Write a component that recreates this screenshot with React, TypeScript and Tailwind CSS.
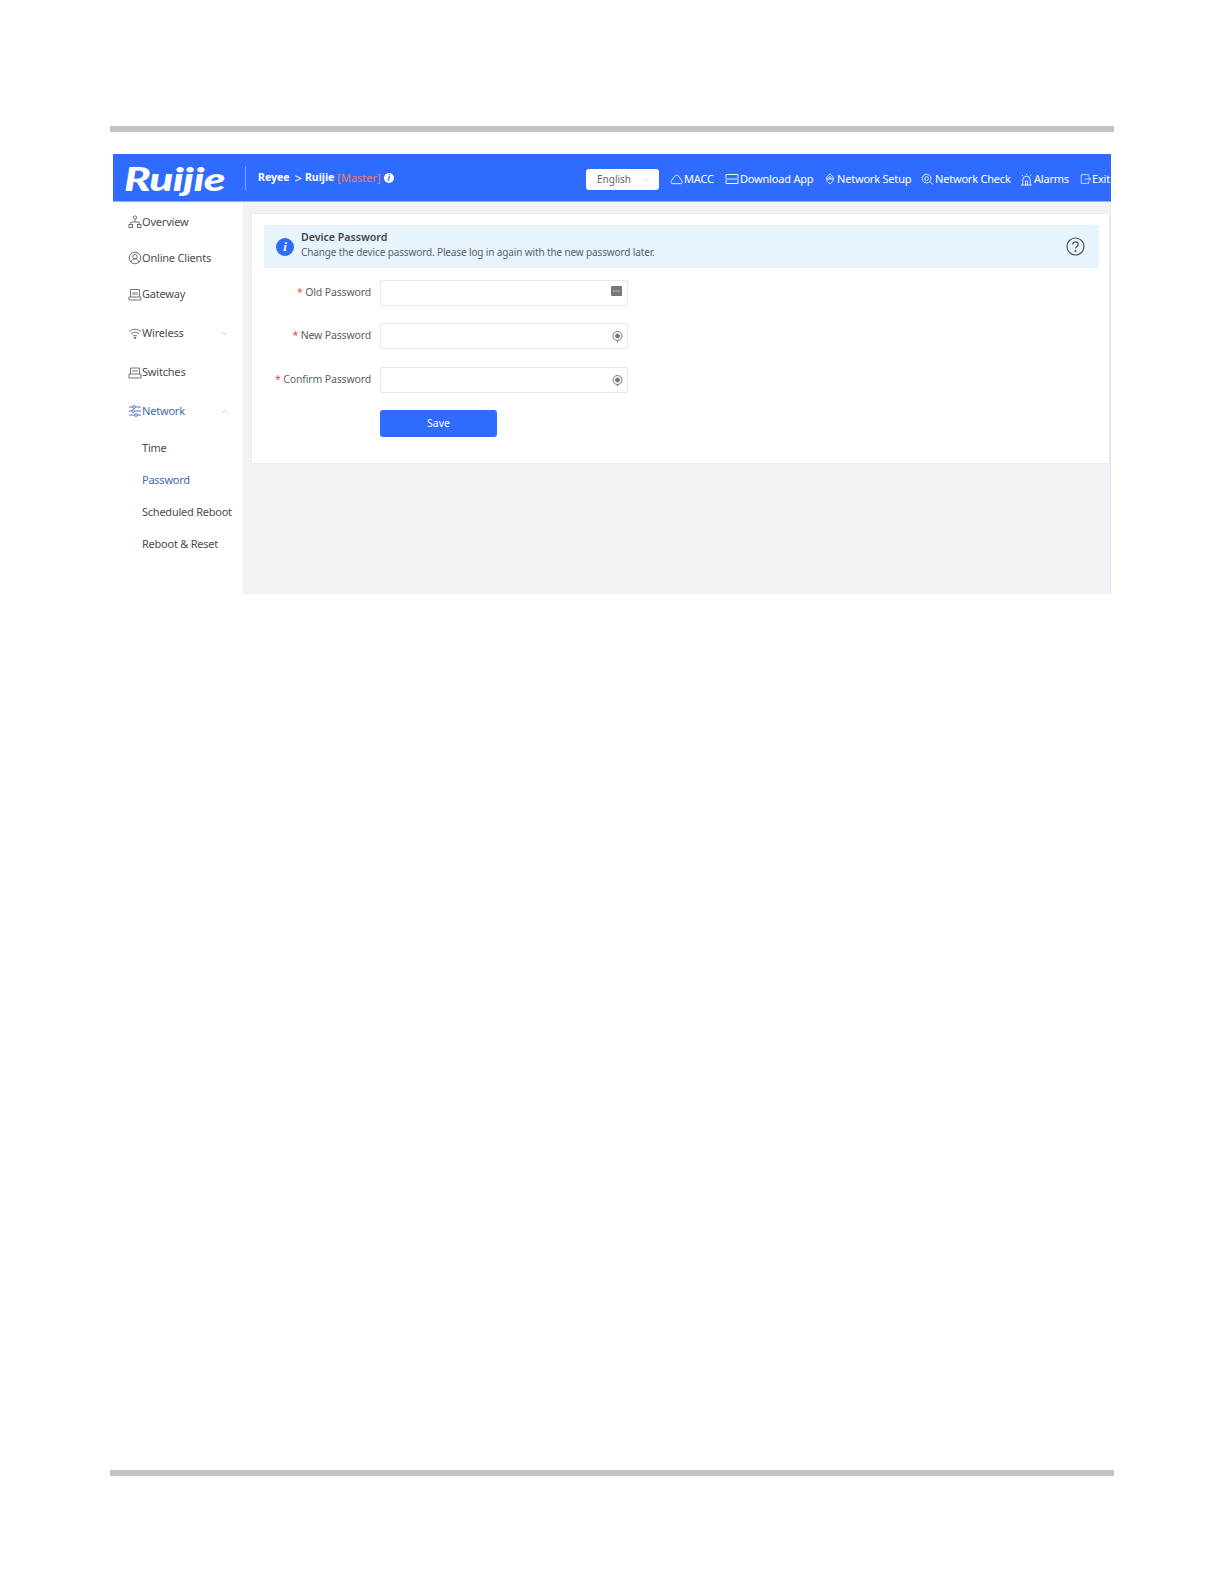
import React from 'react';
import { ChevronDown, ChevronUp } from 'lucide-react';

const font = { fontFamily: '"Noto Sans", "Open Sans", sans-serif' };

const Ico: React.FC<{ size?: number; className?: string; children: React.ReactNode }> = ({ size = 14, className, children }) => (
  <svg width={size} height={size} viewBox="0 0 14 14" fill="none" stroke="currentColor" strokeWidth="0.9" className={className}>
    {children}
  </svg>
);

const OverviewIcon = () => (
  <Ico><rect x="5.5" y="1" width="3" height="3" rx="1" /><rect x="1" y="9.5" width="3.5" height="3" /><rect x="9.5" y="9.5" width="3.5" height="3" /><path d="M7 4v3M2.8 9.5V7h8.4v2.5" /></Ico>
);
const ClientsIcon = () => (
  <Ico><circle cx="7" cy="7" r="5.8" /><circle cx="7" cy="5.6" r="2.2" /><path d="M3 11c.6-2 2-3 4-3s3.400 1 4 3" /></Ico>
);
const GatewayIcon = () => (
  <Ico><path d="M2.500 9V1.500h9V9M1 9h12v3H1zM5 4v3M7 4v3M9 4v3" /></Ico>
);
const WifiIcon = () => (
  <Ico><path d="M1 5.500c3.400-3 8.600-3 12 0M3 7.800c2.300-2 5.700-2 8 0M5 10c1.200-.9 2.800-.9 4 0" /><circle cx="7" cy="11.800" r=".8" fill="currentColor" /></Ico>
);
const SwitchIcon = () => (
  <Ico><path d="M2.500 8V2h9v6M1 8h12v4H1zM4 5h6" /></Ico>
);
const NetworkIcon = () => (
  <Ico><path d="M1 3h3.500M8 3h5M1 7h2M7 7h6M1 11h5M9.500 11H13" /><circle cx="6" cy="3" r="1.400" /><circle cx="5" cy="7" r="1.400" /><circle cx="8" cy="11" r="1.400" /></Ico>
);
const CloudIcon = () => (
  <Ico size={13}><path d="M3 11.500h8.500c2 0 2-2.300 1-3.300L9.500 3.500C8.500 2 6 2 5 3.500L1.200 8.800c-.7 1.200 0 2.700 1.800 2.700z" /></Ico>
);
const AppIcon = () => (
  <Ico size={14}><path d="M1 6V2.500h12V6M1 8v3.500h12V8M0.500 7h13" /></Ico>
);
const SetupIcon = () => (
  <Ico size={12}><path d="M7 1l3.500 3.500v5L7 13 3.500 9.500v-5zM2 7h10" /><circle cx="7" cy="5.500" r="1.300" /></Ico>
);
const CheckIcon = () => (
  <Ico size={13}><circle cx="6" cy="6" r="4.700" /><circle cx="6" cy="6" r="2" /><path d="M9.500 9.500l3.500 3" /></Ico>
);
const AlarmIcon = () => (
  <Ico size={13}><path d="M1 13h12M3 13V7.500a4 4 0 0 1 8 0V13M6 13V8.500h2V13M7 .8v1.500M2 2l1.300 1.300M12 2l-1.300 1.300" /></Ico>
);
const ExitIcon = () => (
  <Ico size={14}><path d="M11 4V1.500H1.500v11H11V10M6 7h7.500M11 4.800L13.500 7 11 9.200" /></Ico>
);
const HelpIcon = () => (
  <svg width="19" height="19" viewBox="0 0 19 19" fill="none" stroke="#4b4f55" strokeWidth="1.200">
    <circle cx="9.500" cy="9.500" r="8.500" />
    <path d="M6.800 7.500c0-3.400 5.400-3.400 5.400 0 0 2-2.700 2-2.700 4" />
    <circle cx="9.500" cy="14" r=".5" />
  </svg>
);
const EyeOffIcon = () => (
  <svg width="11" height="10" viewBox="0 0 11 10" className="mb-[4px] mr-[1px]"><rect width="11" height="10" rx="1" fill="#777" /><path d="M2 5h7" stroke="#ddd" strokeDasharray="1.500 1" /></svg>
);
const EyeIcon = () => (
  <svg width="11" height="13" viewBox="0 0 11 13" fill="none" stroke="#777" strokeWidth="1">
    <circle cx="5.500" cy="6" r="4.500" /><circle cx="5.500" cy="6" r="2" fill="#777" /><path d="M5.500 10.500v2" />
  </svg>
);

const sideMain = [
  { label: 'Overview', icon: <OverviewIcon />, h: 'h-[36px]' },
  { label: 'Online Clients', icon: <ClientsIcon />, h: 'h-[36px]' },
  { label: 'Gateway', icon: <GatewayIcon />, h: 'h-[37px]' },
  { label: 'Wireless', icon: <WifiIcon />, h: 'h-[40px]', more: 'down' },
  { label: 'Switches', icon: <SwitchIcon />, h: 'h-[39px]' },
];

const subItems = ['Time', 'Password', 'Scheduled Reboot', 'Reboot & Reset'];

const fields = [
  { label: 'Old Password', icon: <EyeOffIcon />, mb: 'mb-[17px]' },
  { label: 'New Password', icon: <EyeIcon />, mb: 'mb-[18px]' },
  { label: 'Confirm Password', icon: <EyeIcon />, mb: 'mb-[16px]' },
];

const navLinks = [
  { label: 'MACC', icon: <CloudIcon />, w: 'w-[55px]' },
  { label: 'Download App', icon: <AppIcon />, w: 'w-[99px]' },
  { label: 'Network Setup', icon: <SetupIcon />, w: 'w-[97px]' },
  { label: 'Network Check', icon: <CheckIcon />, w: 'w-[99px]' },
  { label: 'Alarms', icon: <AlarmIcon />, w: 'w-[60px]' },
  { label: 'Exit', icon: <ExitIcon />, w: 'w-[30px]' },
];

export default function App() {
  return (
    <div className="min-h-[1584px] bg-white pt-[126px] pl-[110px] w-[1224px]" style={font}>
      <div className="w-[1004px] h-[6px] bg-[#c3c3c3]" />

      <div className="ml-[3px] mt-[22px] w-[998px]">
        {/* Top bar */}
        <div className="h-[48px] bg-[#2f6bff] border-b border-[#8fb0f5] flex items-center text-white overflow-hidden">
          <div className="w-[132px] pl-[11px] shrink-0">
            <span className="block text-[32px] leading-none font-black italic tracking-[-0.5px] origin-left scale-x-[1.38] mt-[2px]" style={{ fontFamily: 'Lato, sans-serif' }}>Ruijie</span>
          </div>
          <div className="w-px h-[24px] bg-white/40 shrink-0" />
          <div className="flex items-center ml-[12px] text-[10.5px] font-bold w-[328px] shrink-0 pt-[1px]">
            <span>Reyee</span>
            <span className="ml-[5px] font-normal text-[13px] leading-none">&gt;</span>
            <span className="ml-[3px]">Ruijie</span>
            <span className="ml-[3px] font-normal text-[11px] text-[#f0805f]">[Master]</span>
            <span className="ml-[3px] w-[10px] h-[10px] rounded-full bg-white text-[#2f6bff] text-[8px] leading-[10px] text-center italic">i</span>
          </div>
          <div className="w-[73px] h-[21px] bg-white rounded-[3px] flex items-center justify-between pl-[11px] pr-[8px] text-[10px] text-[#666] shrink-0 mr-[11px] mt-[4px]">
            <span>English</span>
            <ChevronDown size={11} strokeWidth={1} className="text-[#aaa]" />
          </div>
          {navLinks.map(n => (
            <div key={n.label} className={`${n.w} shrink-0 flex items-center gap-[1px] text-[11px] tracking-[-0.2px] whitespace-nowrap pt-[3px]`}>
              {n.icon}
              <span>{n.label}</span>
            </div>
          ))}
        </div>

        <div className="flex h-[392px]">
          {/* Sidebar */}
          <div className="w-[130px] shrink-0 pt-[2px] text-[#4a4d52] text-[11px] tracking-[-0.2px]">
            {sideMain.map(s => (
              <div key={s.label} className={`${s.h} flex items-center pl-[15px]`}>
                <span className="text-[#666]">{s.icon}</span>
                <span className="flex-1">{s.label}</span>
                {s.more === 'down' && <ChevronDown size={11} strokeWidth={1} className="mr-[13px] text-[#999]" />}
              </div>
            ))}
            <div className="h-[38px] flex items-center pl-[15px] text-[#3f69b8]">
              <NetworkIcon />
              <span className="flex-1">Network</span>
              <ChevronUp size={11} strokeWidth={1} className="mr-[13px] text-[#999]" />
            </div>
            <div className="pt-[2px]">
              {subItems.map((t, i) => (
                <div key={t} className={`h-[32px] flex items-center pl-[29px] tracking-[-0.24px] whitespace-nowrap ${i === 1 ? 'text-[#3f69b8]' : ''}`}>{t}</div>
              ))}
            </div>
          </div>

          {/* Content */}
          <div className="flex-1 bg-[#f0f2f5] border-r border-[#e8e8e8] pt-[11px] pl-[8px]">
            <div className="h-[251px] bg-white border border-[#ececec] pt-[11px] pl-[12px] pr-[10px]">
              <div className="h-[43px] bg-[#e8f4fd] flex items-center pl-[12px] pr-[14px]">
                <span className="w-[18px] h-[18px] rounded-full bg-[#2f6bff] text-white text-[13px] leading-[18px] text-center font-bold italic shrink-0" style={{ fontFamily: '"Liberation Serif", serif' }}>i</span>
                <div className="ml-[7px] flex-1 pb-[3px]">
                  <div className="text-[10.6px] leading-[15px] font-semibold text-[#3f444b]">Device Password</div>
                  <div className="text-[10px] leading-[15px] tracking-[-0.13px] text-[#5a5f66]">Change the device password. Please log in again with the new password later.</div>
                </div>
                <HelpIcon />
              </div>
              <div className="mt-[12px]">
                {fields.map(f => (
                  <div key={f.label} className={`flex items-center h-[26px] ${f.mb}`}>
                    <label className="w-[107px] text-right text-[10.5px] tracking-[-0.15px] text-[#5a5f66] whitespace-nowrap pb-[1px]">
                      <span className="text-[#e2574c]">* </span>{f.label}
                    </label>
                    <div className="ml-[9px] w-[248px] h-[26px] bg-white border border-[#e6e8eb] rounded-[2px] flex items-center justify-end pr-[4px]">
                      {f.icon}
                    </div>
                  </div>
                ))}
                <button className="ml-[116px] w-[117px] h-[27px] bg-[#2f6bff] rounded-[3px] text-white text-[10.5px]">Save</button>
              </div>
            </div>
          </div>
        </div>
      </div>

      <div className="w-[1004px] h-[6px] bg-[#c3c3c3] mt-[876px]" />
    </div>
  );
}
